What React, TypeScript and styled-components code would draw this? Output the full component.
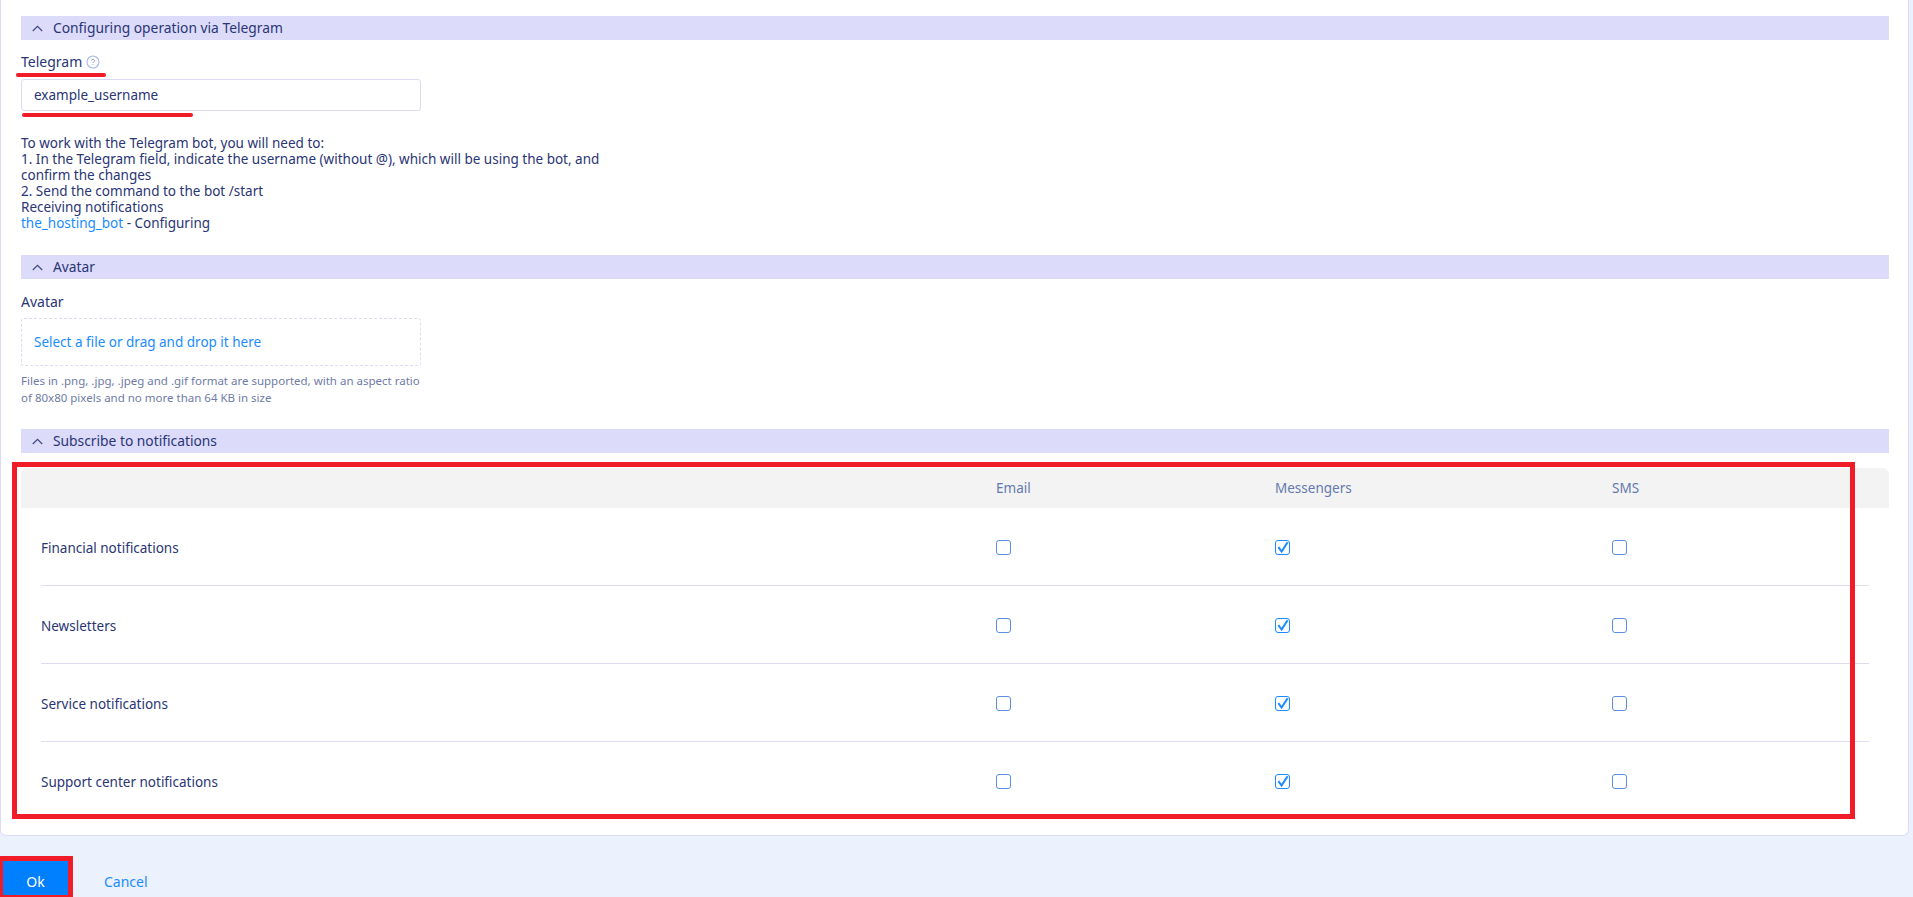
import React from 'react';
import styled, { createGlobalStyle } from 'styled-components';

const GlobalStyle = createGlobalStyle`
  html, body {
    margin: 0;
    height: 100%;
    overflow: hidden;
    background: #ebf1fd;
    font-family: "Noto Sans", "Liberation Sans", sans-serif;
    font-size: 13px;
    color: #2a3575;
  }
`;

const Page = styled.div`
  height: 897px;
  overflow: hidden;
`;

const Panel = styled.div`
  box-sizing: border-box;
  width: 1909px;
  height: 836px;
  padding: 16px 19px 0 20px;
  background: #fff;
  border: 1px solid #dcdaf5;
  border-top: none;
  border-radius: 0 0 6px 6px;
`;

const SectionBar = styled.div`
  display: flex;
  align-items: center;
  gap: 10px;
  height: 24px;
  padding-left: 11px;
  background: #dcdbfa;
  font-size: 13.8px;
  line-height: 24px;
`;

const Chevron = () => (
  <svg width="11" height="7" viewBox="0 0 11 7" fill="none">
    <path d="M.8 6 5.5 1.3 10.2 6" stroke="#3f4a80" strokeWidth="1.2" />
  </svg>
);

const Section = styled.section<{ $gap: number }>`
  margin-bottom: ${(p) => p.$gap}px;
`;

const FieldLabel = styled.div<{ $top: number; $bottom: number }>`
  position: relative;
  display: flex;
  align-items: center;
  gap: 4px;
  height: 16px;
  margin: ${(p) => p.$top}px 0 ${(p) => p.$bottom}px;
  font-size: 14px;
  line-height: 16px;
`;

const HelpIcon = () => (
  <svg width="14" height="14" viewBox="0 0 14 14" fill="none">
    <circle cx="7" cy="7" r="6" stroke="#a9b8e6" strokeWidth="1.1" />
    <path d="M5.5 5.6c.1-.9.8-1.3 1.5-1.3s1.5.5 1.5 1.3c0 1.1-1.5 1.1-1.5 2.3M7 9.2v.8" stroke="#7f93cf" strokeWidth=".9" />
  </svg>
);

const Field = styled.div`
  position: relative;
  box-sizing: border-box;
  display: flex;
  align-items: center;
  width: 400px;
  height: 32px;
  padding-left: 12px;
  border: 1px solid #dcdaf5;
  border-radius: 3px;
  font-size: 13.5px;
`;

const DropZone = styled.div`
  box-sizing: border-box;
  display: flex;
  align-items: center;
  width: 400px;
  height: 48px;
  padding-left: 12px;
  border: 1px dashed #dcdaf5;
  border-radius: 3px;
  font-size: 13.5px;
  color: #1a8cff;
`;

const Underline = styled.span<{ $left: number; $top: number; $width: number }>`
  position: absolute;
  left: ${(p) => p.$left}px;
  top: ${(p) => p.$top}px;
  width: ${(p) => p.$width}px;
  height: 4px;
  border-radius: 2px;
  background: #f01c28;
`;

const HelpText = styled.div`
  width: 600px;
  margin-top: 24px;
  font-size: 13.5px;
  line-height: 16px;
`;

const HelpLink = styled.a`
  color: #1a8cff;
`;

const Hint = styled.div`
  width: 400px;
  margin-top: 6px;
  font-size: 11.5px;
  line-height: 17px;
  color: #6f7ba6;
`;

const TableWrap = styled.div`
  position: relative;
  margin-top: 15px;
`;

const RedFrame = styled.div`
  position: absolute;
  left: -9px;
  top: -6px;
  z-index: 1;
  box-sizing: border-box;
  width: 1843px;
  height: 357px;
  border: 5px solid #f01c28;
  pointer-events: none;
`;

const TableHead = styled.div`
  display: grid;
  grid-template-columns: 955px 279px 337px 1fr;
  align-items: center;
  height: 40px;
  padding: 0 20px;
  background: #f3f3f3;
  border-radius: 6px 6px 0 0;
  font-size: 13.5px;
  color: #6379ad;
`;

const TableRow = styled.div`
  box-sizing: border-box;
  display: grid;
  grid-template-columns: 955px 279px 337px 1fr;
  align-items: center;
  height: 78px;
  padding-top: 2px;
  margin: 0 20px;
  border-bottom: 1px solid #dedbef;
  font-size: 13.5px;

  &:last-of-type {
    border-bottom-color: transparent;
  }
`;

const CheckBox = styled.span<{ $checked?: boolean }>`
  box-sizing: border-box;
  display: block;
  width: 15px;
  height: 15px;
  border: 1px solid ${(p) => (p.$checked ? '#1a8cff' : '#5b8de0')};
  border-radius: 3px;
  position: relative;
`;

const CheckMark = styled.svg`
  position: absolute;
  left: 1px;
  top: 0;
`;

const Actions = styled.div`
  position: relative;
  display: flex;
  align-items: center;
  gap: 33px;
  margin-top: 23px;
`;

const OkButton = styled.button`
  width: 71px;
  height: 44px;
  padding: 0;
  border: none;
  background: #0080ff;
  color: #fff;
  font: inherit;
  font-size: 14px;
`;

const CancelLink = styled.a`
  font-size: 14px;
  color: #1a8cff;
`;

const ButtonFrame = styled.div`
  position: absolute;
  left: -2px;
  top: -3px;
  box-sizing: border-box;
  width: 75px;
  height: 44px;
  border: 5px solid #f01c28;
  pointer-events: none;
`;

const rows = ['Financial notifications', 'Newsletters', 'Service notifications', 'Support center notifications'];

export default function App() {
  return (
    <Page>
      <GlobalStyle />
      <Panel>
        <Section $gap={24}>
          <SectionBar><Chevron />Configuring operation via Telegram</SectionBar>
          <FieldLabel $top={14} $bottom={9}>
            Telegram <HelpIcon />
            <Underline $left={-5} $top={19} $width={90} />
          </FieldLabel>
          <Field>
            example_username
            <Underline $left={0} $top={33} $width={171} />
          </Field>
          <HelpText>
            To work with the Telegram bot, you will need to:<br />
            1. In the Telegram field, indicate the username (without @), which will be using the bot, and confirm the changes<br />
            2. Send the command to the bot /start<br />
            Receiving notifications<br />
            <HelpLink>the_hosting_bot</HelpLink> - Configuring
          </HelpText>
        </Section>
        <Section $gap={23}>
          <SectionBar><Chevron />Avatar</SectionBar>
          <FieldLabel $top={15} $bottom={8}>Avatar</FieldLabel>
          <DropZone>Select a file or drag and drop it here</DropZone>
          <Hint>Files in .png, .jpg, .jpeg and .gif format are supported, with an aspect ratio of 80x80 pixels and no more than 64 KB in size</Hint>
        </Section>
        <Section $gap={0}>
          <SectionBar><Chevron />Subscribe to notifications</SectionBar>
          <TableWrap>
            <RedFrame />
            <TableHead>
              <span />
              <span>Email</span>
              <span>Messengers</span>
              <span>SMS</span>
            </TableHead>
            {rows.map((name) => (
              <TableRow key={name}>
                <span>{name}</span>
                <CheckBox />
                <CheckBox $checked>
                  <CheckMark width="12" height="13" viewBox="0 0 12 13" fill="none">
                    <path d="M1.4 6.2 4.6 10.6 10.6 1.2" stroke="#1a8cff" strokeWidth="2" />
                  </CheckMark>
                </CheckBox>
                <CheckBox />
              </TableRow>
            ))}
          </TableWrap>
        </Section>
      </Panel>
      <Actions>
        <OkButton>Ok</OkButton>
        <CancelLink>Cancel</CancelLink>
        <ButtonFrame />
      </Actions>
    </Page>
  );
}
